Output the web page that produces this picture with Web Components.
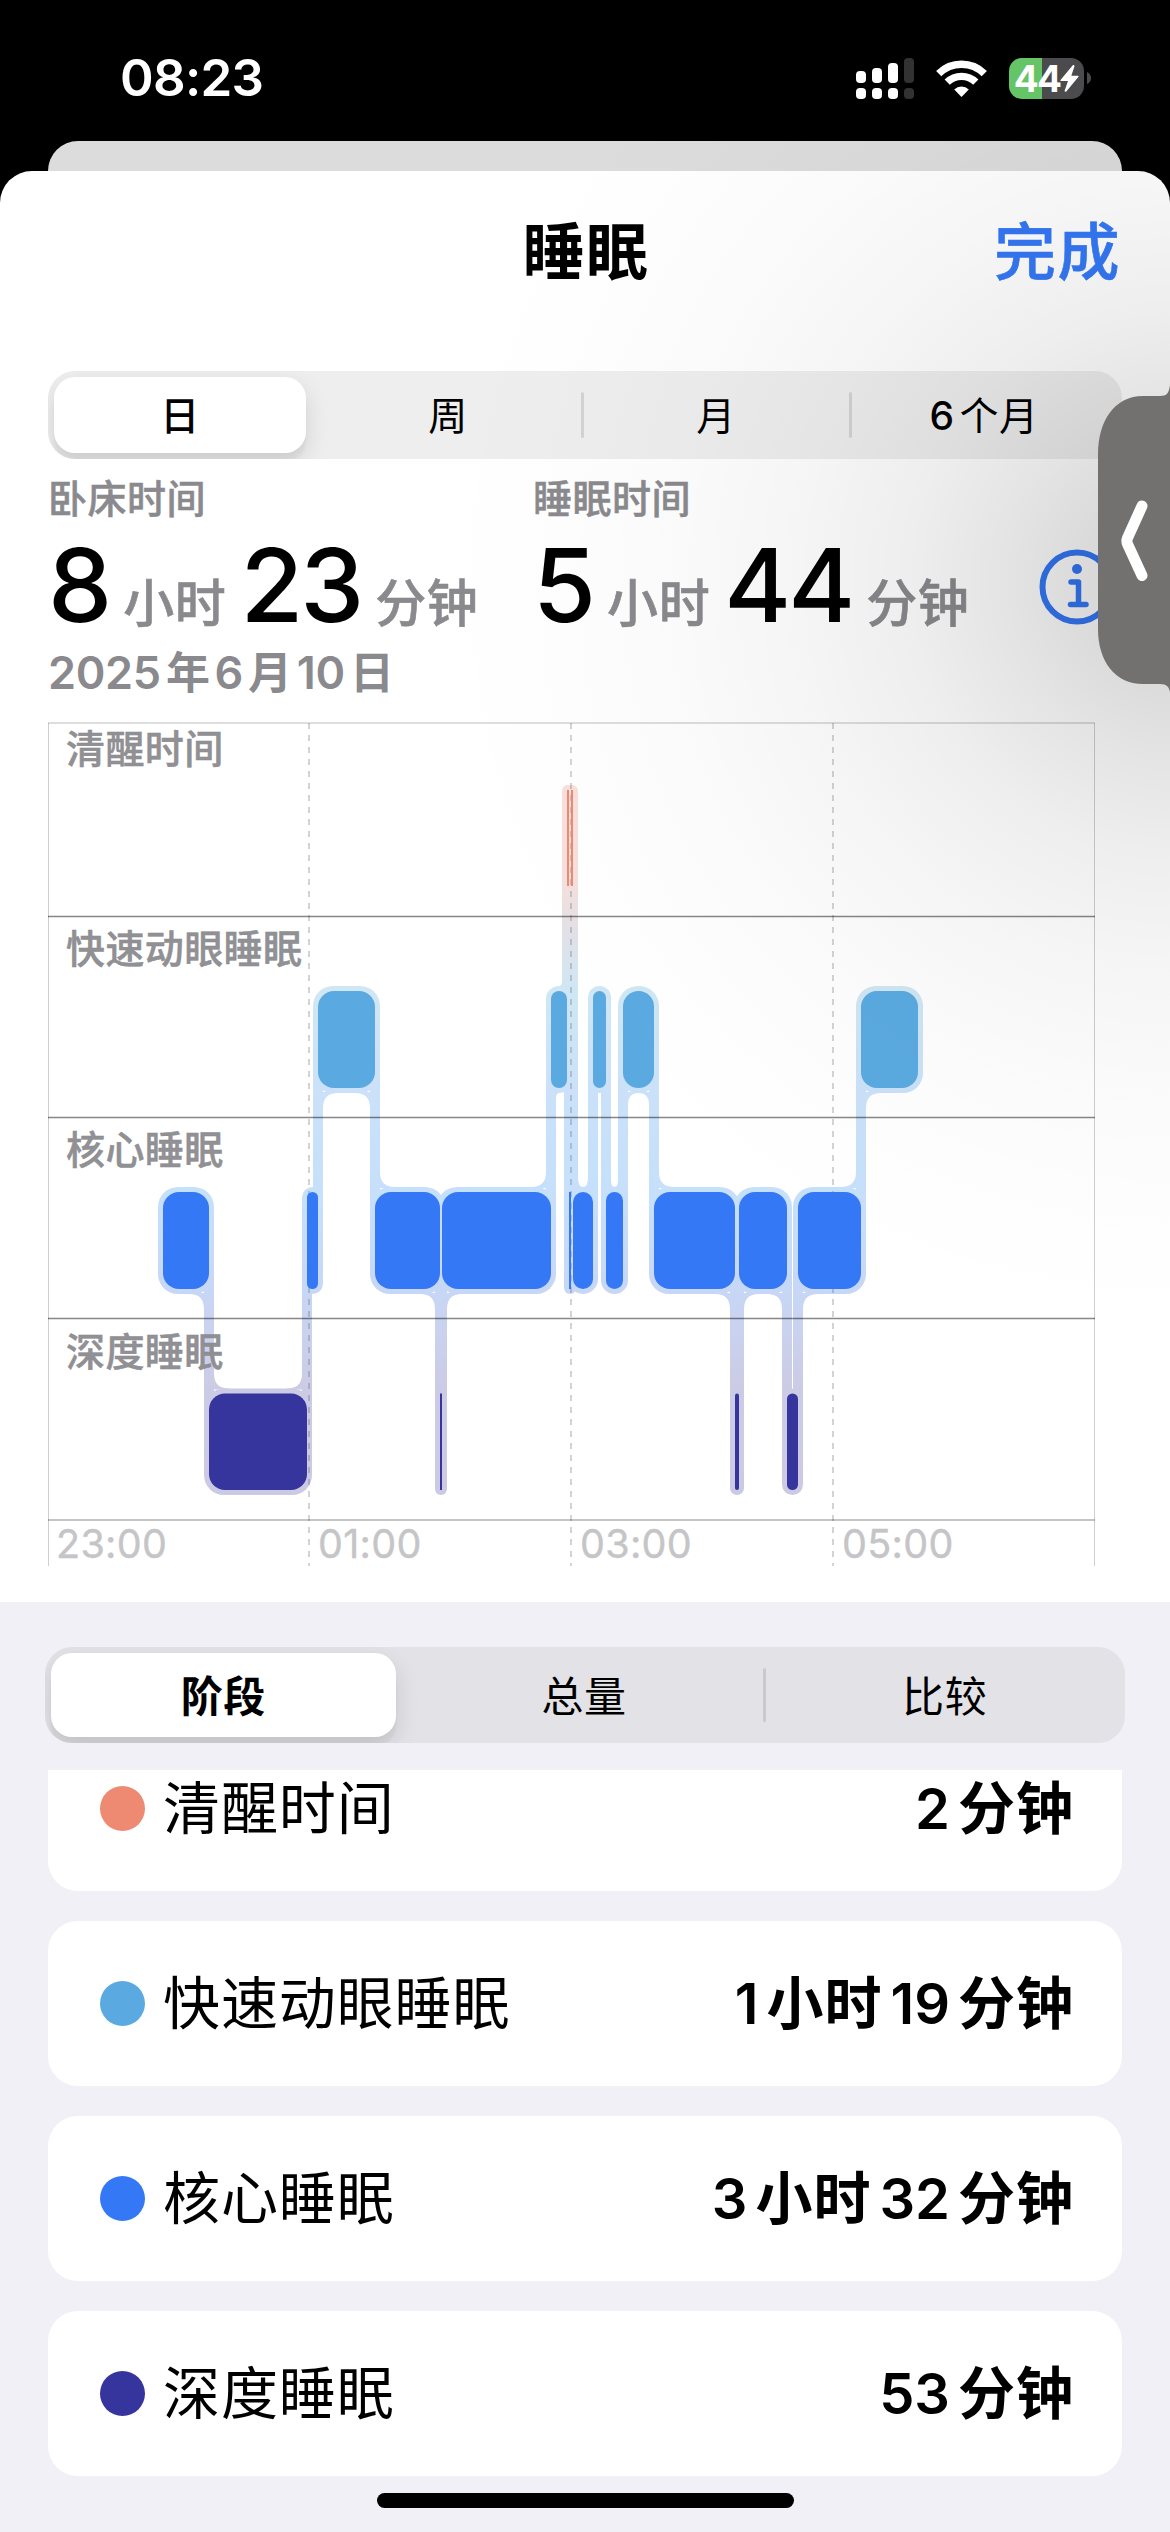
<!DOCTYPE html>
<html lang="zh-CN">
<head>
<meta charset="utf-8">
<title>睡眠</title>
<style>
html, body {
  margin: 0;
  padding: 0;
}

body {
  width: 1170px;
  height: 2532px;
  overflow: hidden;
  background: #000;
  color: #000;
  font-family: Inter, "Noto Sans CJK SC", sans-serif;
}
</style>
</head>
<body>
<sleep-app></sleep-app>

<script>
function define(name, html, setup) {
  const template = document.createElement('template');
  template.innerHTML = html;
  customElements.define(name, class extends HTMLElement {
    constructor() {
      super();
      this.attachShadow({mode: 'open'}).appendChild(
          template.content.cloneNode(true));
    }

    connectedCallback() {
      if (setup) {
        setup(this, this.shadowRoot);
      }
    }
  });
}

define('status-bar', `
<style>
:host {
  display: flex;
  align-items: center;
  justify-content: space-between;
  box-sizing: border-box;
  height: 141px;
  padding: 15px 79px 0 120px;
  color: #fff;
}
time {
  font-size: 51px;
  font-weight: 600;
  line-height: 60px;
  letter-spacing: -0.700px;
}
.icons {
  display: flex;
  align-items: center;
}
.wifi { margin: 0 22px 0 22px; }
.battery {
  display: flex;
  align-items: center;
  gap: 3px;
}
.cell {
  display: flex;
  align-items: center;
  justify-content: center;
  width: 75px;
  height: 41px;
  border-radius: 13px;
  background: linear-gradient(90deg, #65c466 33px, #4b4b4d 33px);
  font-size: 37px;
  font-weight: 700;
  line-height: 41px;
  letter-spacing: -1.800px;
}
svg { display: block; }
</style>
<time>08:23</time>
<div class="icons">
  <svg width="58" height="41" viewBox="0 0 58 41" fill="#fff">
    <rect x="0" y="13" width="10" height="12" rx="4"/>
    <rect x="16" y="10" width="10" height="15" rx="4"/>
    <rect x="32" y="5" width="10" height="20" rx="4"/>
    <rect x="48" y="0" width="10" height="25" rx="4" fill="#323232"/>
    <rect x="0" y="30" width="10" height="11" rx="4"/>
    <rect x="16" y="30" width="10" height="11" rx="4"/>
    <rect x="32" y="30" width="10" height="11" rx="4"/>
    <rect x="48" y="30" width="10" height="11" rx="4" fill="#323232"/>
  </svg>
  <svg class="wifi" width="51" height="37" viewBox="0 0 51 37" fill="none" stroke="#fff" stroke-width="7.4">
    <path d="M2.7 13.6 A32.5 32.5 0 0 1 48.3 13.6"/>
    <path d="M11.2 22.2 A20.5 20.5 0 0 1 39.8 22.2"/>
    <path d="M25.500 37 L18.200 29.400 A10.500 10.500 0 0 1 32.800 29.400 Z" fill="#fff" stroke="none"/>
  </svg>
  <div class="battery">
    <div class="cell">44<svg width="19" height="27" viewBox="0 0 19 27" fill="#fff"><path d="M13 0 L0.500 15 Q0 16 1 16 H8 L4.500 26 Q5 27.500 6.500 26.300 L18.500 11.800 Q19 10.800 18 10.800 H11.300 L14.500 1.200 Q14.300 -0.500 13 0 Z"/></svg></div>
    <svg width="4" height="12" viewBox="0 0 4 12" fill="#4b4b4d"><path d="M0 0 Q4 2 4 6 T0 12 Z"/></svg>
  </div>
</div>
`);

define('sheet-header', `
<style>
:host {
  display: grid;
  grid-template-columns: 1fr auto 1fr;
  align-items: center;
  height: 157px;
  padding: 3px 49px 0 51px;
  font-size: 62px;
  font-weight: 600;
  line-height: 80px;
  letter-spacing: 1.500px;
}
.title {
  grid-column: 2;
}
::slotted(button) {
  justify-self: end;
  padding: 0;
  border: 0;
  background: none;
  color: #3478f6;
  font: inherit;
  font-weight: 500;
  letter-spacing: inherit;
  -webkit-text-stroke: 0.600px #3478f6;
}
</style>
<div class="title"><slot></slot></div>
<slot name="action"></slot>
`);

define('segment-item', `
<style>
:host {
  display: flex;
  flex: 1;
  align-items: center;
  justify-content: center;
  position: relative;
  font-weight: 400;
}
:host([divided])::before {
  content: '';
  position: absolute;
  left: -1px;
  top: 15px;
  bottom: 15px;
  width: 3px;
  border-radius: 2px;
  background: #3c3c4326;
}
:host([selected])::before {
  content: '';
  position: absolute;
  inset: 0 8px;
  border-radius: 21px;
  background: #fff;
  box-shadow: 0 9px 24px #0000001f, 0 9px 3px #0000000a;
}
:host([selected]) { font-weight: var(--selected-weight, 600); }
span {
  position: relative;
  padding-bottom: 4px;
}
</style>
<span><slot></slot></span>
`);

define('segmented-control', `
<style>
:host {
  display: flex;
  box-sizing: border-box;
  padding: 6px 0;
  overflow: hidden;
  border-radius: 27px;
}
::slotted(:first-child) { margin-left: -2px; }
</style>
<slot></slot>
`);

define('sleep-metric', `
<style>
:host { display: block; }
.label {
  color: #8a8a8e;
  font-size: 39px;
  font-weight: 500;
  line-height: 46px;
  letter-spacing: 0.500px;
  -webkit-text-stroke: 0.500px #8a8a8e;
}
.value {
  display: flex;
  align-items: baseline;
  margin-top: 13px;
  line-height: 100px;
  height: 100px;
}
.number {
  font-size: 102px;
  font-weight: 500;
  letter-spacing: -3px;
}
.unit {
  color: #8a8a8e;
  font-size: 51px;
  font-weight: 500;
  letter-spacing: 0.600px;
  margin: 0 14px;
  -webkit-text-stroke: 0.600px #8a8a8e;
}
</style>
<div class="label"><slot></slot></div>
<div class="value">
  <span class="number hours"></span><span class="unit">小时</span>
  <span class="number minutes"></span><span class="unit">分钟</span>
</div>
`, (host, root) => {
  root.querySelector('.hours').textContent = host.getAttribute('hours');
  root.querySelector('.minutes').textContent = host.getAttribute('minutes');
});

// [stage, start x, end x] in chart pixels.
const BLOCKS = [
  ['core', 163, 209],
  ['deep', 209, 307],
  ['core', 307, 318],
  ['rem', 318, 375],
  ['core', 375, 440],
  ['deep', 440, 442],
  ['core', 442, 551],
  ['rem', 551, 567],
  ['awake', 567, 569],
  ['core', 569, 571],
  ['awake', 571, 573],
  ['core', 573, 593],
  ['rem', 593, 606],
  ['core', 606, 623],
  ['rem', 623, 654],
  ['core', 654, 735],
  ['deep', 735, 739],
  ['core', 739, 787],
  ['deep', 787, 798],
  ['core', 798, 861],
  ['rem', 861, 918],
];

const STAGES = {
  awake: {top: 790, bottom: 886, color: '#ee8972'},
  rem: {top: 991, bottom: 1088, color: '#5aaae1'},
  core: {top: 1192, bottom: 1289, color: '#3478f6'},
  deep: {top: 1393.5, bottom: 1490, color: '#36349d'},
};

const HALO = 5;
const FILLET = 15;

function rect(x, y, width, height, radius, fill = '') {
  return `<rect x="${x}" y="${y}" width="${width}" height="${height}" rx="${radius}"${fill && ` fill="${fill}"`}/>`;
}

// Concave corner that joins a connector to the edge of a block.
function fillet(x, y, dx, dy, block) {
  const r = Math.min(FILLET, (block[2] - block[1]) / 2 - HALO);
  if (r < 2) {
    return '';
  }
  const ry = Math.max(r, Math.min(12, r * 2));
  return `<path d="M${x - dx} ${y - dy} H${x + dx * r} V${y} Q${x} ${y} ${x} ${y + dy * ry} H${x - dx} Z"/>`;
}

function drawBlocks() {
  let halo = '';
  let bars = '';
  BLOCKS.forEach((block, i) => {
    const [name, x0, x1] = block;
    const {top, bottom, color} = STAGES[name];
    const width = x1 - x0;
    const radius = width > 2 ? Math.min(16, width / 2) : 0;
    halo += rect(x0 - HALO, top - HALO, width + HALO * 2,
        bottom - top + HALO * 2, Math.min(20, width / 2 + HALO));
    bars += rect(x0, top, width, bottom - top, radius, color);

    const next = BLOCKS[i + 1];
    if (!next) {
      return;
    }
    const down = STAGES[next[0]].top > top;
    const upper = down ? block : next;
    const lower = down ? next : block;
    const y0 = STAGES[upper[0]].bottom;
    const y1 = STAGES[lower[0]].top;
    halo += rect(x1 - HALO, y0 - 20, HALO * 2, y1 - y0 + 40, 0);
    const side = down ? -1 : 1;
    halo += fillet(x1 + side * HALO, y0 + HALO, side, 1, upper);
    halo += fillet(x1 - side * HALO, y1 - HALO, -side, -1, lower);
  });
  return {halo, bars};
}

define('sleep-chart', `
<style>
:host {
  display: grid;
  grid-template-rows: 193px 201px 202px 201px 46px;
  position: relative;
  margin-left: 48px;
  width: 1047px;
  height: 843px;
}
svg {
  position: absolute;
  left: -48px;
  top: -3px;
}
.stage {
  position: relative;
  align-self: start;
  padding: 10px 0 0 18px;
  color: #8a8a8ef2;
  font-size: 39px;
  font-weight: 500;
  line-height: 46px;
  letter-spacing: 0.400px;
  -webkit-text-stroke: 0.500px #8a8a8e;
}
.stage:first-of-type { padding-top: 3px; }
.hours {
  display: grid;
  grid-template-columns: 262px 262px 262px 1fr;
  position: relative;
  color: #c5c5c7;
  font-size: 39.500px;
  line-height: 48px;
  letter-spacing: 0.300px;
  -webkit-text-stroke: 0.400px #c5c5c7;
}
.hours span { padding-left: 8px; }
</style>
<svg width="1170" height="860" viewBox="0 720 1170 860">
  <defs>
    <linearGradient id="halo" gradientUnits="userSpaceOnUse" x1="0" y1="785" x2="0" y2="1495">
      <stop offset="0" stop-color="#f9dfdb"/>
      <stop offset="0.142" stop-color="#f4e0dd"/>
      <stop offset="0.215" stop-color="#e0e1e8"/>
      <stop offset="0.283" stop-color="#d0e7f3"/>
      <stop offset="0.430" stop-color="#cae1f9"/>
      <stop offset="0.573" stop-color="#c6e0fb"/>
      <stop offset="0.709" stop-color="#c7d7f6"/>
      <stop offset="0.850" stop-color="#cccbe5"/>
      <stop offset="1" stop-color="#cccae3"/>
    </linearGradient>
  </defs>
  <g class="halo" fill="url(#halo)"></g>
  <g fill="none">
    <path d="M48 723 H1095" stroke="#dedee0" stroke-width="2"/>
    <path d="M48.500 723 V1566 M1094.500 723 V1566" stroke="#00000030" stroke-width="1"/>
    <path d="M309 723 V1566 M571 723 V1566 M833 723 V1566" stroke="#3c3c4338" stroke-width="2" stroke-dasharray="6 6"/>
    <path d="M48 916.500 H1095 M48 1117.500 H1095 M48 1318.500 H1095" stroke="#00000078" stroke-width="1.400"/>
    <path d="M48 1520 H1095" stroke="#0000003a" stroke-width="2"/>
  </g>
  <g class="bars"></g>
</svg>
<div class="stage">清醒时间</div>
<div class="stage">快速动眼睡眠</div>
<div class="stage">核心睡眠</div>
<div class="stage">深度睡眠</div>
<div class="hours"><span>23:00</span><span>01:00</span><span>03:00</span><span>05:00</span></div>
`, (host, root) => {
  const {halo, bars} = drawBlocks();
  root.querySelector('.halo').innerHTML = halo;
  root.querySelector('.bars').innerHTML = bars;
});

define('stage-row', `
<style>
:host {
  display: flex;
  flex: none;
  align-items: center;
  box-sizing: border-box;
  height: 165px;
  padding: 0 48px 0 52px;
  border-radius: 30px;
  background: #fff;
  font-size: 57px;
  line-height: 80px;
}
.dot {
  width: 45px;
  height: 45px;
  margin-right: 18px;
  border-radius: 50%;
  background: var(--stage-color);
}
.name { letter-spacing: 0.900px; }
.value {
  margin-left: auto;
  font-weight: 600;
  letter-spacing: 1px;
}
.value b {
  font-weight: inherit;
  font-size: 56px;
  margin: 0 8px;
  letter-spacing: 0;
}
</style>
<div class="dot"></div>
<div class="name"><slot></slot></div>
<div class="value"></div>
`, (host, root) => {
  root.querySelector('.value').innerHTML =
      host.getAttribute('value').replace(/\d+/g, '<b>$&</b>');
});

define('edge-handle', `
<style>
:host {
  display: block;
  position: absolute;
  right: 0;
  top: 380px;
  width: 72px;
  height: 320px;
}
svg { display: block; }
</style>
<svg width="72" height="320" viewBox="0 0 72 320">
  <path d="M72 5 C71 13 69 16 62 16 H45 C17 16 0 40 0 75 V249 C0 281 17 304 45 304 H62 C69 304 71 307 72 312 Z" fill="#72716f"/>
  <path d="M44 126 L29.500 158 Q28.300 161 29.500 164 L44 195.500" fill="none" stroke="#fff" stroke-width="11" stroke-linecap="round" stroke-linejoin="round"/>
</svg>
`);

define('home-indicator', `
<style>
:host {
  display: block;
  position: absolute;
  left: 377px;
  bottom: 24px;
  width: 417px;
  height: 15px;
  border-radius: 8px;
  background: #000;
}
</style>
`);

define('sleep-app', `
<style>
:host {
  display: flex;
  flex-direction: column;
  position: relative;
  height: 2532px;
}
.backdrop {
  height: 30px;
  margin: 0 48px;
  border-radius: 30px 30px 0 0;
  background: #dcdcdc;
}
.sheet {
  display: flex;
  flex: 1;
  flex-direction: column;
  overflow: hidden;
  border-radius: 32px 32px 0 0;
  background: #fff;
}
.range {
  --selected-weight: 500;
  height: 88px;
  margin: 40px 48px 0;
  padding-right: 4px;
  background: #eeeeef;
  font-size: 39px;
  letter-spacing: 0.500px;
}
.range b {
  margin-right: 5px;
  font-weight: 500;
}
.summary {
  display: flex;
  margin: 17px 48px 0;
  height: 156px;
}
.summary sleep-metric {
  flex: none;
  width: 485px;
}
.summary svg {
  flex: none;
  margin: 73px 0 0 21px;
}
.date {
  margin: 15px 0 0 48px;
  color: #8a8a8e;
  font-size: 45px;
  font-weight: 600;
  line-height: 52px;
  letter-spacing: -0.300px;
}
.date i {
  font-style: normal;
  font-size: 44px;
  margin: 0 5px;
}
sleep-chart { margin-top: 24px; }
.panel {
  display: flex;
  flex: 1;
  flex-direction: column;
  min-height: 0;
  margin-top: 36px;
  background: #f1f0f6;
}
.detail {
  flex: none;
  height: 96px;
  margin: 45px 45px 0;
  background: #e3e2e7;
  font-size: 42px;
  letter-spacing: 0.600px;
}
.list {
  display: flex;
  flex: 1;
  flex-direction: column;
  justify-content: flex-end;
  gap: 30px;
  min-height: 0;
  margin: 27px 48px 0;
  padding-bottom: 56px;
  overflow: hidden;
}
.shade {
  position: absolute;
  inset: 141px 0 900px 0;
  pointer-events: none;
  background: radial-gradient(circle 740px at 1180px 440px,
      #0000002e 0, #00000026 12%, #0000001b 24%, #00000011 37%,
      #0000000a 52%, #00000005 68%, #00000002 84%, #00000000 100%);
}
</style>
<status-bar></status-bar>
<div class="backdrop"></div>
<div class="sheet">
  <sheet-header>睡眠<button slot="action">完成</button></sheet-header>
  <segmented-control class="range">
    <segment-item selected>日</segment-item>
    <segment-item>周</segment-item>
    <segment-item divided>月</segment-item>
    <segment-item divided><b>6</b>个月</segment-item>
  </segmented-control>
  <div class="summary">
    <sleep-metric hours="8" minutes="23">卧床时间</sleep-metric>
    <sleep-metric hours="5" minutes="44">睡眠时间</sleep-metric>
    <svg width="76" height="76" viewBox="0 0 76 76" fill="none" stroke="#3478f6">
      <circle cx="38" cy="38" r="34.500" stroke-width="6"/>
      <circle cx="38" cy="20" r="5" fill="#3478f6" stroke="none"/>
      <path d="M32 33 H39.500 V55 M31.500 55.500 H47" stroke-width="5.500" stroke-linecap="round" stroke-linejoin="round"/>
    </svg>
  </div>
  <div class="date">2025<i>年</i>6<i>月</i>10<i>日</i></div>
  <sleep-chart></sleep-chart>
  <div class="panel">
    <segmented-control class="detail">
      <segment-item selected>阶段</segment-item>
      <segment-item>总量</segment-item>
      <segment-item divided>比较</segment-item>
    </segmented-control>
    <div class="list">
      <stage-row value="2分钟" style="--stage-color: #ee8972">清醒时间</stage-row>
      <stage-row value="1小时19分钟" style="--stage-color: #5aaae1">快速动眼睡眠</stage-row>
      <stage-row value="3小时32分钟" style="--stage-color: #3478f6">核心睡眠</stage-row>
      <stage-row value="53分钟" style="--stage-color: #36349d">深度睡眠</stage-row>
    </div>
  </div>
</div>
<div class="shade"></div>
<edge-handle></edge-handle>
<home-indicator></home-indicator>
`);
</script>
</body>
</html>
